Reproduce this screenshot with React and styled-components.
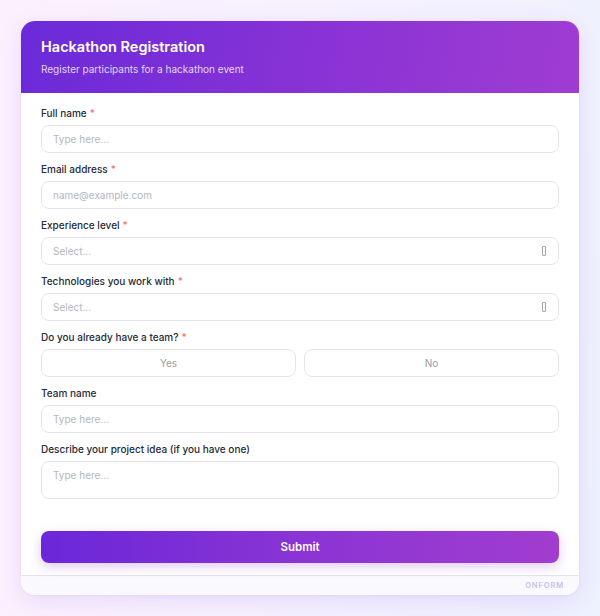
import React from "react";
import styled, { createGlobalStyle } from "styled-components";

const Global = createGlobalStyle`
  html, body { margin: 0; padding: 0; }
  body {
    font-family: Inter, "Noto Sans", sans-serif;
    background: linear-gradient(100deg, #fbf1fd 0%, #f6f1fe 50%, #eef1fe 100%);
    min-height: 616px;
  }
  * { box-sizing: border-box; }
`;

const F = {
  Page: styled.div`
    padding: 21px 21px 20px;
  `,
  Card: styled.div`
    background: #fff;
    border-radius: 14px;
    overflow: hidden;
    box-shadow: 0 6px 24px rgba(124, 58, 237, 0.12), 0 1px 3px rgba(124, 58, 237, 0.08);
  `,
  Header: styled.div`
    height: 72px;
    padding: 17px 20px 0;
    background: linear-gradient(100deg, #6a2ad9 0%, #8a33d5 55%, #9f3cd2 100%);
    color: #fff;
  `,
  Title: styled.h1`
    margin: 0;
    font-size: 14.5px;
    font-weight: 600;
    line-height: 18px;
  `,
  Subtitle: styled.p`
    margin: 6px 0 0;
    font-size: 10px;
    line-height: 14px;
    color: rgba(255, 255, 255, 0.82);
  `,
  Body: styled.div`
    padding: 12px 20px 12px;
    display: flex;
    flex-direction: column;
    gap: 8px;
  `,
  Field: styled.div`
    display: flex;
    flex-direction: column;
    gap: 4px;
  `,
  Label: styled.label`
    font-size: 10px;
    font-weight: 500;
    line-height: 16px;
    color: #262a36;
    span {
      color: #f87171;
      margin-left: 3px;
    }
  `,
  Input: styled.div`
    height: ${(p) => (p.$tall ? "38px" : "28px")};
    border: 1.5px solid #e4e4ec;
    border-radius: 8px;
    padding: ${(p) => (p.$tall ? "7px 11px" : "0 11px")};
    display: flex;
    align-items: ${(p) => (p.$tall ? "flex-start" : "center")};
    justify-content: space-between;
    font-size: 10px;
    color: #b4b6c0;
    background: #fff;
  `,
  Caret: styled.span`
    width: 4px;
    height: 10px;
    border: 1px solid #a8a8b0;
    border-radius: 1px;
    margin-right: 1px;
  `,
  Toggles: styled.div`
    display: grid;
    grid-template-columns: 1fr 1fr;
    gap: 8px;
  `,
  Toggle: styled.div`
    height: 28px;
    border: 1.5px solid #e4e4ec;
    border-radius: 8px;
    display: flex;
    align-items: center;
    justify-content: center;
    font-size: 10px;
    color: #9a9ca6;
  `,
  Submit: styled.button`
    margin-top: 24px;
    height: 32px;
    border: none;
    border-radius: 8px;
    background: linear-gradient(90deg, #6a27d8 0%, #8a34d4 50%, #a13dcf 100%);
    color: #fff;
    font-family: inherit;
    font-size: 11.5px;
    font-weight: 600;
    box-shadow: 0 4px 12px rgba(139, 52, 212, 0.25);
  `,
  Footer: styled.div`
    height: 20px;
    border-top: 1px solid #e5e3ef;
    background: #faf9fe;
    display: flex;
    align-items: center;
    justify-content: flex-end;
    padding-right: 15px;
    font-size: 7.5px;
    font-weight: 600;
    letter-spacing: 0.9px;
    color: #c7bff5;
  `,
};

const TextField = ({ label, required, placeholder, select, tall }) => (
  <F.Field>
    <F.Label>
      {label}
      {required && <span>*</span>}
    </F.Label>
    <F.Input $tall={tall}>
      {placeholder}
      {select && <F.Caret />}
    </F.Input>
  </F.Field>
);

const App = () => (
  <>
    <Global />
    <F.Page>
      <F.Card>
        <F.Header>
          <F.Title>Hackathon Registration</F.Title>
          <F.Subtitle>Register participants for a hackathon event</F.Subtitle>
        </F.Header>
        <F.Body>
          <TextField label="Full name" required placeholder="Type here..." />
          <TextField label="Email address" required placeholder="name@example.com" />
          <TextField label="Experience level" required placeholder="Select..." select />
          <TextField label="Technologies you work with" required placeholder="Select..." select />
          <F.Field>
            <F.Label>
              Do you already have a team?<span>*</span>
            </F.Label>
            <F.Toggles>
              <F.Toggle>Yes</F.Toggle>
              <F.Toggle>No</F.Toggle>
            </F.Toggles>
          </F.Field>
          <TextField label="Team name" placeholder="Type here..." />
          <TextField label="Describe your project idea (if you have one)" placeholder="Type here..." tall />
          <F.Submit>Submit</F.Submit>
        </F.Body>
        <F.Footer>ONFORM</F.Footer>
      </F.Card>
    </F.Page>
  </>
);

export default App;
